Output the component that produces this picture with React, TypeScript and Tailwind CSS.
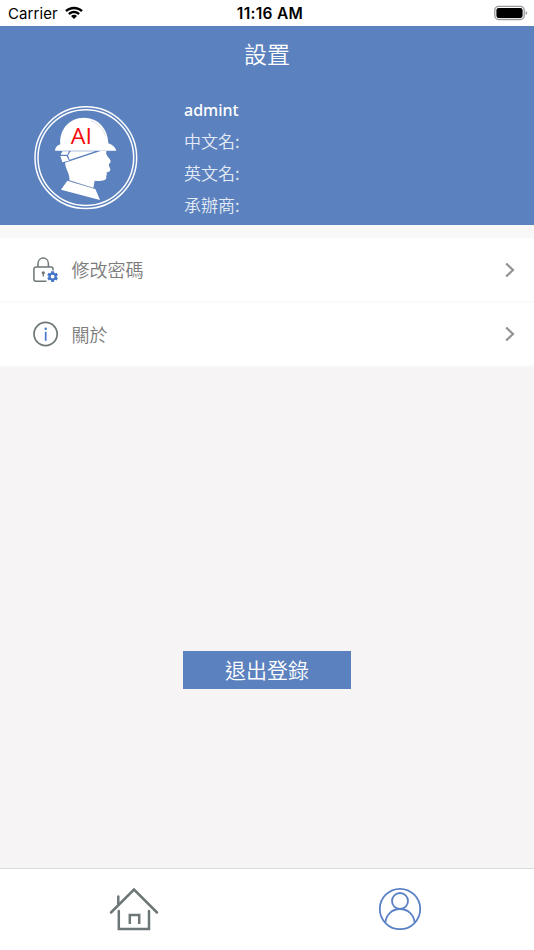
import React from 'react';

const BLUE = '#5a82c4';
const GREY = '#6e7777';

function StatusBar() {
    return (
        <div className="relative h-[26px] bg-white flex items-center justify-between pl-2 pr-[6.5px] text-black font-['Inter','Liberation_Sans',sans-serif]">
            <div className="flex items-center">
                <span className="text-[15px] leading-[26px] tracking-[0.1px] pt-[2px]">Carrier</span>
                <svg className="ml-[7px]" width="18" height="14" viewBox="0 0 18 14">
                    <path d="M9 0.7C5.6 0.7 2.5 2 0.2 4.2L1.9 6C3.8 4.2 6.3 3.2 9 3.2C11.7 3.2 14.2 4.2 16.1 6L17.8 4.2C15.5 2 12.4 0.7 9 0.7Z" />
                    <path d="M9 4.8C6.7 4.8 4.6 5.7 3.1 7.2L4.8 8.9C5.9 7.9 7.3 7.2 9 7.2C10.7 7.2 12.1 7.9 13.2 8.9L14.9 7.2C13.4 5.7 11.3 4.8 9 4.8Z" />
                    <path d="M9 8.8C7.8 8.8 6.8 9.3 6 10L9 13.1L12 10C11.2 9.3 10.2 8.8 9 8.8Z" />
                </svg>
            </div>
            <span className="absolute left-1/2 top-0 -translate-x-1/2 ml-[3px] pt-[2px] text-[15.5px] leading-[24px] font-semibold tracking-[0.3px] whitespace-nowrap">11:16 AM</span>
            <svg width="34" height="16" viewBox="0 0 34 16">
                <rect x="0.8" y="1.3" width="29.4" height="13.2" rx="3.8" fill="none" stroke="#999" strokeWidth="1.3" />
                <rect x="2.4" y="3" width="26.2" height="9.9" rx="2.2" />
                <path d="M31.7 6V10C32.8 9.5 33.2 8.8 33.2 8C33.2 7.2 32.8 6.5 31.7 6Z" fill="#999" />
            </svg>
        </div>
    );
}

function Avatar() {
    return (
        <svg className="ml-[30px] shrink-0" width="112" height="112" viewBox="0 0 336 336">
            <circle cx="167.5" cy="173" r="152.5" fill="none" stroke="#fff" strokeWidth="4.5" />
            <circle cx="167.5" cy="173" r="143.5" fill="none" stroke="#fff" strokeWidth="4.5" />
            {/* head */}
            <path d="M105 188L212 153H229C227 161 230 168 239 177C242 181 243 186 240 189C236 191 236 195 238 200C241 205 242 211 239 214L229 218C232 222 231 225 228 228C230 232 229 235 227 238C221 244 207 243 194 242L190 264L118 241C121 222 108 213 105 188Z" fill="#fff" />
            <path d="M112 242L196 267L210 300L93 269Z" fill="#fff" />
            <path d="M121 243L192 265" stroke="#8c99ad" strokeWidth="1.5" />
            {/* hat strap */}
            <path d="M97 154H117L112 164H92Z" fill="#fff" />
            <path d="M91 168H110L117 182L97 187Z" fill="#fff" />
            <path d="M122 154H196L119 179L114 166Z" fill="#fff" />
            {/* hat */}
            <path d="M75 152C75 143 81 136 91 133C87 88 119 53 161 53C205 53 234 87 235 130C248 134 256 142 259 152Z" fill="#fff" />
            <path d="M182 62C204 69 219 87 227 107" fill="none" stroke="#c9d0da" strokeWidth="2" />
            <text x="122" y="132" fill="#f50d0d" fontSize="64" textLength="64" lengthAdjust="spacingAndGlyphs" className="font-['Open_Sans','Noto_Sans',sans-serif]">AI</text>
        </svg>
    );
}

function LockIcon() {
    return (
        <svg width="26" height="26" viewBox="0 0 26 26" fill="none">
            <path d="M5 10V6.8C5 3.5 7.3 1.1 10.2 1.1C13.1 1.1 15.4 3.5 15.4 6.8V10" stroke={GREY} strokeWidth="1.5" />
            <path d="M20 13.5V12C20 10.8 19.3 10 18 10H3C1.7 10 .9 10.8 .9 12V22C.9 23.4 1.7 24.2 3 24.2H13.5" stroke={GREY} strokeWidth="1.5" />
            <circle cx="10.3" cy="15.8" r="1.6" fill={GREY} />
            <path d="M10.3 16V19.5" stroke={GREY} strokeWidth="1.3" />
            <circle cx="19.6" cy="19.6" r="3.1" stroke="#4876c8" strokeWidth="2.3" />
            <path d="M19.6 14.2V16.6M19.6 22.6V25M14.9 16.9L17 18.1M22.2 21.1L24.3 22.3M14.9 22.3L17 21.1M22.2 18.1L24.3 16.9" stroke="#4876c8" strokeWidth="2.8" />
        </svg>
    );
}

function InfoIcon() {
    return (
        <svg width="26" height="26" viewBox="0 0 26 26" fill="none">
            <circle cx="12.6" cy="13" r="11.6" stroke={GREY} strokeWidth="1.7" />
            <circle cx="12.7" cy="7.7" r="1.2" fill="#4876c8" />
            <path d="M12.7 10.8V19.8" stroke="#4876c8" strokeWidth="1.7" />
        </svg>
    );
}

function MenuRow({icon, label}: {icon: React.ReactNode; label: string}) {
    return (
        <div className="h-[64.5px] bg-white border-b-2 border-[#fafafa] flex items-center pt-px pl-[33px] pr-[19px]">
            {icon}
            <span className="ml-[12.5px] -mt-px flex-1 text-[18px] leading-6 font-[350] text-[#7c7c7c]">{label}</span>
            <svg width="10" height="14" viewBox="0 0 10 14" fill="none">
                <path d="M1.1 .5L8 7L1.1 13.5" stroke="#929292" strokeWidth="2.2" />
            </svg>
        </div>
    );
}

export default function App() {
    const details = ['中文名:', '英文名:', '承辦商:'];

    return (
        <div className="w-full h-screen flex flex-col overflow-hidden bg-[#f6f4f5] font-['Noto_Sans_CJK_TC',sans-serif]">
            <StatusBar />
            <header className="h-[199px] bg-[#5b81be] text-white flex flex-col">
                <h1 className="mt-[9px] text-center text-[23px] leading-9 font-[350]">設置</h1>
                <div className="mt-[3px] flex items-start">
                    <div className="mt-[26px]"><Avatar /></div>
                    <div className="ml-[42px] mt-5">
                        <p className="h-[31px] leading-[33px] text-[16px] font-medium font-['Noto_Sans',sans-serif]">admint</p>
                        {details.map((item) => (
                            <p key={item} className="h-8 leading-8 text-[17px] font-[350] text-[#e4ebf6]">{item}</p>
                        ))}
                    </div>
                </div>
            </header>
            <div className="h-[13px] bg-[#f8f8f8]" />
            <MenuRow icon={<LockIcon />} label="修改密碼" />
            <MenuRow icon={<InfoIcon />} label="關於" />
            <main className="flex-1 flex flex-col items-center">
                <button className="mt-[283.5px] w-[168px] h-[38.5px] bg-[#5b81be] text-white text-[21px] leading-[37px] font-[350]">退出登錄</button>
            </main>
            <nav className="h-[82px] bg-white border-t border-[#dcdcdc] flex">
                <button className="flex-1 flex justify-center pt-[18px] pl-px">
                    <svg width="50" height="46" viewBox="0 0 50 46" fill="none" stroke={GREY} strokeWidth="2.5">
                        <path d="M2 25.5L25 2.5L48 25.5" strokeLinecap="round" />
                        <path d="M9.3 17.5V9.5" strokeLinecap="round" />
                        <path d="M9.8 24V42H40V24" strokeLinecap="round" />
                        <path d="M20.8 37V28H30.2V37" />
                    </svg>
                </button>
                <button className="flex-1 flex justify-center pt-[18px] pr-px">
                    <svg width="44" height="44" viewBox="0 0 44 44" fill="none" stroke={BLUE} strokeWidth="1.8">
                        <circle cx="22" cy="22" r="20.2" />
                        <circle cx="22" cy="14" r="8" />
                        <path d="M7.4 35.7C8 28 14 22 22 22C30 22 36 28 36.6 35.7" />
                    </svg>
                </button>
            </nav>
        </div>
    );
}
